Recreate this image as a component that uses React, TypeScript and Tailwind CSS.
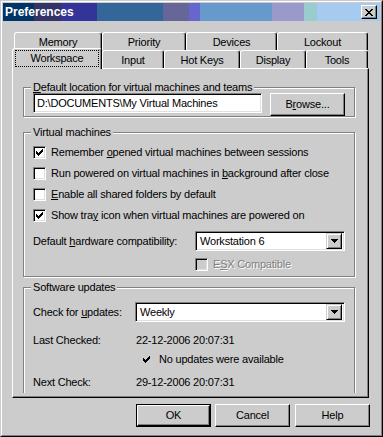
import type { ReactNode } from 'react'

const ROW1 = [
  { label: 'Memory', w: 'w-[88px]' },
  { label: 'Priority', w: 'w-[84px]' },
  { label: 'Devices', w: 'w-[91px]' },
  { label: 'Lockout', w: 'w-[91px]' },
]

const ROW2 = [
  { label: 'Input', w: 'w-[62px]' },
  { label: 'Hot Keys', w: 'w-[76px]' },
  { label: 'Display', w: 'w-[66px]' },
  { label: 'Tools', w: 'w-[62px]' },
]

const raised =
  'border border-t-white border-l-white border-r-black border-b-black shadow-[inset_-1px_-1px_#808080] bg-[#cccccc]'
const sunken =
  'border border-t-[#808080] border-l-[#808080] border-r-white border-b-white shadow-[inset_1px_1px_#000,inset_-1px_-1px_#dfdfdf]'

function CheckMark() {
  return (
    <svg width="7" height="7" viewBox="0 0 7 7" shapeRendering="crispEdges">
      <path d="M6 0h1v1h-1z M5 1h2v1h-2z M0 2h1v1h-1z M4 2h3v1h-3z M0 3h2v1h-2z M3 3h3v1h-3z M0 4h5v1h-5z M1 5h3v1h-3z M2 6h1v1h-1z" fill="#000" />
    </svg>
  )
}

function Arrow() {
  return (
    <svg width="7" height="4" viewBox="0 0 7 4" shapeRendering="crispEdges">
      <path d="M0 0h7v1h-1v1h-1v1h-1v1h-1v-1h-1v-1h-1v-1h-1z" fill="#000" />
    </svg>
  )
}

function Check({ checked, disabled, children }: { checked?: boolean; disabled?: boolean; children: ReactNode }) {
  return (
    <div className="flex items-center gap-[5px] h-[13px]">
      <span
        className={`w-[13px] h-[13px] shrink-0 flex items-center justify-center ${sunken} ${
          disabled ? 'bg-[#cccccc]' : 'bg-white'
        }`}
      >
        {checked && <CheckMark />}
      </span>
      <span className={disabled ? 'text-[#808080] [text-shadow:1px_1px_0_#fff]' : ''}>{children}</span>
    </div>
  )
}

function Combo({ value, w }: { value: string; w: string }) {
  return (
    <div className={`${w} h-[20px] ${sunken} bg-white flex items-center p-[2px]`}>
      <span className="flex-1 pl-[2px] leading-[16px]">{value}</span>
      <span className="w-[16px] h-[16px] flex items-center justify-center border border-t-[#cccccc] border-l-[#cccccc] border-r-black border-b-black shadow-[inset_1px_1px_#fff,inset_-1px_-1px_#808080] bg-[#cccccc]">
        <Arrow />
      </span>
    </div>
  )
}

function Button({ children, def, className = '' }: { children: ReactNode; def?: boolean; className?: string }) {
  if (def) {
    return (
      <div className={`w-[75px] h-[23px] border border-black ${className}`}>
        <div className={`h-full flex items-center justify-center ${raised}`}>{children}</div>
      </div>
    )
  }
  return <div className={`w-[75px] h-[23px] flex items-center justify-center ${raised} ${className}`}>{children}</div>
}

function Group({ label, className, children }: { label: ReactNode; className: string; children: ReactNode }) {
  return (
    <div className={`w-[332px] shrink-0 flex flex-col border border-[#808080] shadow-[inset_1px_1px_#fff,1px_1px_#fff] ${className}`}>
      <span className="self-start -my-[7px] ml-[7px] px-[2px] h-[13px] bg-[#cccccc]">{label}</span>
      {children}
    </div>
  )
}

function Tab({ label, w }: { label: string; w: string }) {
  return (
    <div
      className={`${w} h-[18px] flex items-center justify-center pt-px rounded-t-[3px] border-t border-l border-r border-t-white border-l-white border-r-black shadow-[inset_-1px_0_#808080] bg-[#cccccc]`}
    >
      {label}
    </div>
  )
}

export default function App() {
  return (
    <div className="w-[383px] h-[437px] bg-[#cccccc] border border-t-[#cccccc] border-l-[#cccccc] border-r-black border-b-black font-['Liberation_Sans',Arial,sans-serif] text-[11px] leading-[13px] tracking-[-0.2px] text-black select-none">
      <div className="h-full border border-t-white border-l-white border-r-[#808080] border-b-[#808080] p-px flex flex-col">
        {/* title bar */}
        <div className="h-[18px] shrink-0 flex items-center justify-between pl-[2px] pr-[3px] bg-[linear-gradient(to_right,#003366_31px,#333366_31px,#333366_58px,#333399_58px,#333399_94px,#336699_94px,#336699_160px,#666699_160px,#666699_186px,#6666cc_186px,#6666cc_197px,#6699cc_197px,#6699cc_269px,#9999cc_269px,#9999cc_301px,#99cccc_301px,#99cccc_314px,#a6caf0_314px)]">
          <span className="text-white font-bold text-[12px] leading-[14px] tracking-normal">Preferences</span>
          <span className={`w-[16px] h-[14px] flex items-center justify-center ${raised}`}>
            <svg width="8" height="7" viewBox="0 0 8 7" shapeRendering="crispEdges">
              <path d="M0 0h2v1h-2z M6 0h2v1h-2z M1 1h2v1h-2z M5 1h2v1h-2z M2 2h4v1h-4z M3 3h2v1h-2z M2 4h4v1h-4z M1 5h2v1h-2z M5 5h2v1h-2z M0 6h2v1h-2z M6 6h2v1h-2z" fill="#000" />
            </svg>
          </span>
        </div>

        {/* tabs + panel */}
        <div className="mt-[11px] ml-[9px] w-[357px] flex flex-col">
          <div className="flex h-[18px] pl-[2px]">
            {ROW1.map((t) => (
              <Tab key={t.label} label={t.label} w={t.w} />
            ))}
          </div>
          <div className="flex items-end h-[20px] -mt-[2px]">
            <div className="relative z-10 w-[90px] h-[21px] -mb-px rounded-t-[3px] border-t border-l border-r border-t-white border-l-white border-r-black shadow-[inset_-1px_0_#808080] bg-[#cccccc] px-[2px] pt-px">
              <div className="h-[17px] border border-dotted border-black flex items-center justify-center">Workspace</div>
            </div>
            {ROW2.map((t) => (
              <Tab key={t.label} label={t.label} w={t.w} />
            ))}
          </div>

          <div className="h-[330px] border border-t-white border-l-white border-r-black border-b-black shadow-[inset_-1px_-1px_#808080] pl-[10px]">
            <div className="h-[324px] overflow-hidden flex flex-col">
              <Group
                className="mt-[18px] h-[30px]"
                label={
                  <>
                    <u>D</u>efault location for virtual machines and teams
                  </>
                }
              >
                <div className="flex items-start gap-[8px] mt-[6px] ml-[9px]">
                  <div className={`w-[229px] h-[20px] ${sunken} bg-white flex items-center pl-[3px]`}>
                    D:\DOCUMENTS\My Virtual Machines
                  </div>
                  <Button>
                    B<u>r</u>owse...
                  </Button>
                </div>
              </Group>

              <Group className="mt-[15px] h-[145px]" label="Virtual machines">
                <div className="ml-[9px] mt-[14px] flex flex-col gap-[8px]">
                  <Check checked>
                    Remember <u>o</u>pened virtual machines between sessions
                  </Check>
                  <Check>
                    Run powered on virtual machines in <u>b</u>ackground after close
                  </Check>
                  <Check>
                    <u>E</u>nable all shared folders by default
                  </Check>
                  <Check checked>
                    Show tra<u>y</u> icon when virtual machines are powered on
                  </Check>
                </div>
                <div className="ml-[9px] mt-[9px] flex items-center">
                  <span className="w-[162px]">
                    Default <u>h</u>ardware compatibility:
                  </span>
                  <Combo value="Workstation 6" w="w-[150px]" />
                </div>
                <div className="ml-[171px] mt-[7px]">
                  <Check disabled>
                    E<u>S</u>X Compatible
                  </Check>
                </div>
              </Group>

              <Group className="mt-[10px] h-[140px]" label="Software updates">
                <div className="ml-[9px] mt-[15px] flex items-center">
                  <span className="w-[102px]">
                    Check for <u>u</u>pdates:
                  </span>
                  <Combo value="Weekly" w="w-[210px]" />
                </div>
                <div className="ml-[9px] mt-[12px] flex">
                  <span className="w-[103px]">Last Checked:</span>
                  <span>22-12-2006 20:07:31</span>
                </div>
                <div className="ml-[119px] mt-[6px] flex items-center gap-[9px]">
                  <CheckMark />
                  <span>No updates were available</span>
                </div>
                <div className="ml-[9px] mt-[10px] flex">
                  <span className="w-[103px]">Next Check:</span>
                  <span>29-12-2006 20:07:31</span>
                </div>
              </Group>
            </div>
          </div>
        </div>

        {/* buttons */}
        <div className="flex mt-[6px] ml-[133px]">
          <Button def>OK</Button>
          <Button className="ml-[4px]">Cancel</Button>
          <Button className="ml-[5px]">Help</Button>
        </div>
      </div>
    </div>
  )
}
